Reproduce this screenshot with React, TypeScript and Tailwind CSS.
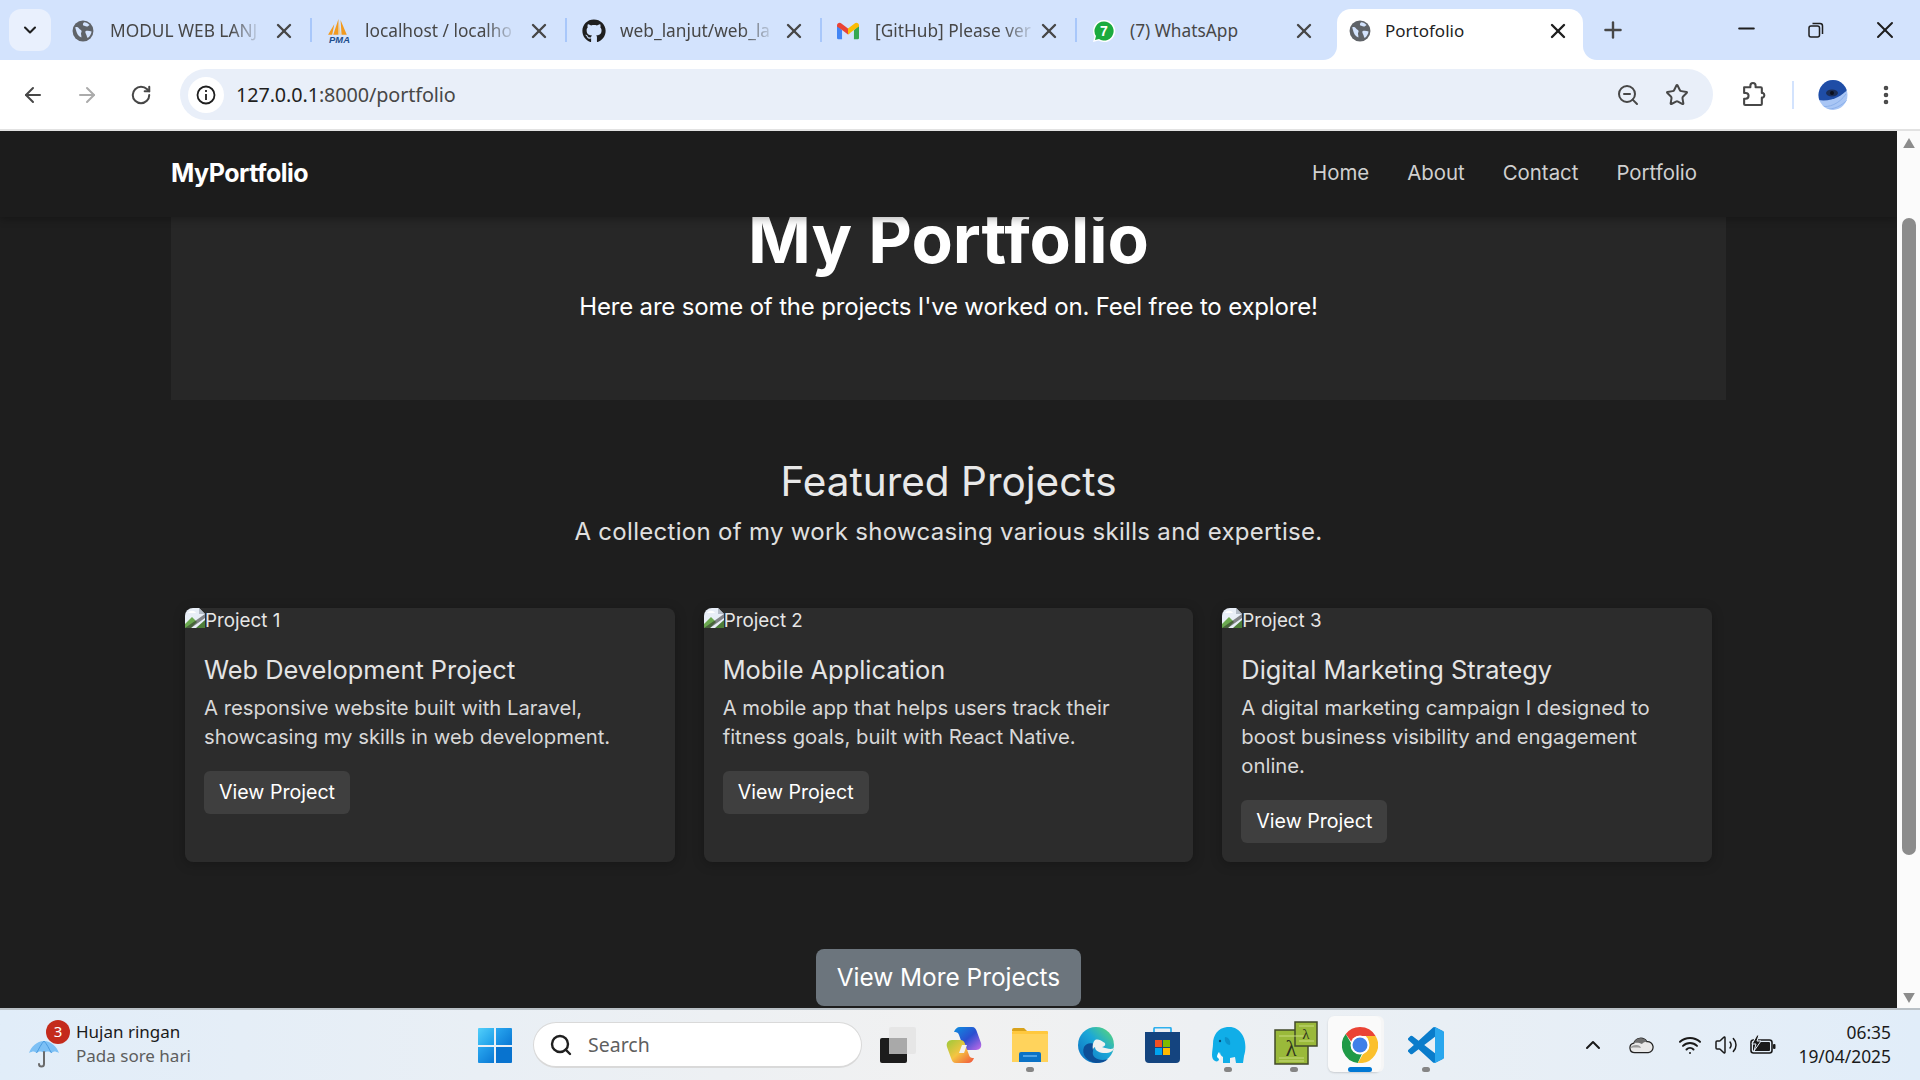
import React from "react";
import { ArrowLeft, ArrowRight, RotateCw, X, Plus, Minus, ChevronDown, ChevronUp, Star, ZoomOut, EllipsisVertical, Search, Wifi, Volume2 } from "lucide-react";
import { FaGithub } from "react-icons/fa";

const Globe = () => (
  <svg viewBox="0 0 20 20" className="w-[22px] h-[22px] shrink-0">
    <circle cx="10" cy="10" r="9.5" fill="#5f6368" />
    <path d="M3 6.5c1.5-.3 2.6.2 3.4 1.2.8 1 2 1 2.3 2.2.2 1-.7 1.6-.5 2.8.1.9.5 1.800.3 3.300C5.500 14.800 4.500 12 4 10.500 3.700 9 3.200 8 3 6.500zM11 2c2 .2 3.700 1 5 2.500-1 .5-1.500 1.700-2.800 1.500-1.200-.2-1.900-1.200-3-1C9.600 4.200 10 3 11 2zM12.500 10c1.500-.4 3.600-.2 5.300.4-.2 2.200-1.500 4.400-3.500 6-.8-1-.8-2-1.300-3-.4-1.100-1.500-2.700-.5-3.400z" fill="#d3e3fd" />
  </svg>
);
const Pma = () => (
  <svg viewBox="0 0 24 24" className="w-[25px] h-[25px] shrink-0">
    <path d="M11 0 6 15h5zM13 1l1 14h5zM7 5 1 15h4z" fill="#f29a1f" />
    <path d="M11.500 3 12 15h1z" fill="#f7c66b" />
    <text x="12" y="23" textAnchor="middle" fontFamily="Liberation Sans" fontStyle="italic" fontWeight="700" fontSize="9" fill="#1e4e8c">PMA</text>
  </svg>
);
const Gh = () => <FaGithub className="w-[24px] h-[24px] shrink-0 text-[#1f1f1f]" />;
const Gmail = () => (
  <svg viewBox="0 0 24 18" className="w-[22px] h-[18px] shrink-0">
    <path d="M0 3v13.500A1.500 1.500 0 0 0 1.500 18H5.500V8z" fill="#4285f4" />
    <path d="M24 3v13.500a1.500 1.500 0 0 1-1.500 1.500H18.500V8z" fill="#34a853" />
    <path d="M0 3c0-2.500 2.800-3.800 4.800-2.300L12 6.200l2 5-2 1.500-6.500-4.700L0 4z" fill="#ea4335" />
    <path d="M18.500 8 12 12.700V6.200L19.200.7C21.200-.8 24 .5 24 3v1z" fill="#fbbc04" />
  </svg>
);
const Wa = () => (
  <svg viewBox="0 0 24 24" className="w-[24px] h-[24px] shrink-0">
    <path d="M12 1a11 11 0 0 0-9.500 16.500L1 23l5.700-1.500A11 11 0 1 0 12 1z" fill="#ffffff" />
    <path d="M12 2.500a9.500 9.500 0 0 0-8 14.600L3 21l4-1a9.500 9.500 0 1 0 5-17.500z" fill="#1aab3e" />
    <text x="12" y="17" textAnchor="middle" fontFamily="Liberation Sans" fontWeight="700" fontSize="14" fill="#fff">7</text>
  </svg>
);

function Tab({ icon, title, sep = true }: { icon: React.ReactNode; title: string; sep?: boolean }) {
  return (
    <div className="relative w-[255px] h-[51px] pb-[7px] shrink-0 flex items-center">
      <div className="w-[50px] pl-[12px] flex justify-start">{icon}</div>
      <div className="w-[150px] whitespace-nowrap text-[17.3px] text-[#474747]">
        {sep ? <span className="inline-block [mask-image:linear-gradient(90deg,#000_82%,rgba(0,0,0,0.15))]">{title}</span> : title}
      </div>
      <X className="ml-[12px] w-[24px] h-[24px] text-[#474747]" strokeWidth={2.4} />
      {sep && <div className="absolute right-[3px] top-[9px] h-[24px] w-[2px] bg-[#a8c7fa]" />}
    </div>
  );
}

const Broken = () => (
  <svg viewBox="0 0 20 20" className="w-[20px] h-[20px] shrink-0">
    <path d="M0 1.500A1.500 1.500 0 0 1 1.500 0H14l6 6v14H0z" fill="#e8eef7" />
    <path d="M14 0v6h6z" fill="#b5bdc8" />
    <path d="M3 5c2-3 6-3 8 0z" fill="#fff" />
    <path d="M0 20v-4l7-7 5 5-6 6z" fill="#6aa84f" />
    <path d="M20 12v8h-9z" fill="#4d7d38" />
    <path d="M0 20 20 6v4L6 20z" fill="#2c2c2c" opacity=".55" />
  </svg>
);

function Card({ n, title, lines }: { n: number; title: string; lines: string[] }) {
  return (
    <div className="h-[254px] bg-[#2c2c2c] rounded-[8px] shadow-[0_2px_12px_rgba(0,0,0,0.25)]">
      <div className="flex h-[26px] items-start overflow-hidden rounded-tl-[8px]">
        <Broken />
        <span className="text-[18.8px] leading-[26px] text-[#e6e6e6]">Project {n}</span>
      </div>
      <div className="pl-[19px]">
        <div className="mt-[17px] text-[25.4px] leading-[38px] font-normal text-[#e4e4e4]">{title}</div>
        <div className="mt-[4px] text-[20.3px] leading-[29px] text-[#d8d8d8]">
          {lines.map((l) => <div key={l} className="whitespace-nowrap">{l}</div>)}
        </div>
        <div className="mt-[20px] w-[146px] h-[43px] rounded-[6px] bg-[#3f3f3f] text-white text-[19.6px] flex items-center justify-center">View Project</div>
      </div>
    </div>
  );
}

function TaskIcon({ children, dot, active }: { children: React.ReactNode; dot?: boolean; active?: boolean }) {
  return (
    <div className="relative w-[66px] h-[70px] shrink-0 flex items-center justify-center">
      {active && <div className="absolute left-[1px] top-[6px] w-[53px] h-[56px] rounded-[6px] bg-[#fafafa] shadow-[3px_0_0_#f6f6f6,0_1px_2px_rgba(0,0,0,0.15)]" />}
      <div className="relative">{children}</div>
      {dot && <div className="absolute left-[29px] top-[57px] w-[8px] h-[5px] rounded-full bg-[#858585]" />}
      {active && <div className="absolute left-[21px] top-[57px] w-[24px] h-[5px] rounded-full bg-[#0078d4]" />}
    </div>
  );
}

const WinLogo = () => (
  <svg viewBox="0 0 34 35" className="w-[34px] h-[35px]">
    <defs>
      <linearGradient id="w1" x1="0" y1="0" x2="1" y2="1"><stop offset="0" stopColor="#52cffa" /><stop offset="1" stopColor="#1a9be8" /></linearGradient>
      <linearGradient id="w2" x1="0" y1="0" x2="1" y2="1"><stop offset="0" stopColor="#2aa8f0" /><stop offset="1" stopColor="#0a78d4" /></linearGradient>
    </defs>
    <path d="M1 0h15v17H0V1a1 1 0 0 1 1-1z" fill="url(#w1)" />
    <path d="M18 0h15a1 1 0 0 1 1 1v16H18z" fill="url(#w2)" />
    <path d="M0 19h16v16H1a1 1 0 0 1-1-1z" fill="url(#w2)" />
    <path d="M18 19h16v15a1 1 0 0 1-1 1H18z" fill="#0873cf" />
  </svg>
);
const TaskView = () => (
  <svg viewBox="0 0 36 36" className="w-[36px] h-[36px]">
    <rect x="0" y="11" width="27" height="25" rx="2" fill="#1c1c1c" />
    <rect x="9" y="0" width="27" height="27" rx="2" fill="#e4e4e4" opacity=".85" />
    <rect x="9" y="11" width="18" height="16" fill="#a9a9a9" />
  </svg>
);
const Copilot = () => (
  <svg viewBox="0 0 36 36" className="w-[36px] h-[36px]">
    <defs>
      <linearGradient id="c1" x1="0" y1="0" x2="1" y2="1"><stop offset="0" stopColor="#0f8fe0" /><stop offset=".5" stopColor="#2a4fd0" /><stop offset="1" stopColor="#c86be8" /></linearGradient>
      <linearGradient id="c2" x1="0" y1="0" x2="1" y2="1"><stop offset="0" stopColor="#9cc93a" /><stop offset=".5" stopColor="#f5c542" /><stop offset="1" stopColor="#f0503c" /></linearGradient>
    </defs>
    <path d="M14 0h12c3 0 4 2 5 5l4 11c1 4-1 7-5 7h-8c-3 0-4-1-5-4L13 8c-1-3-3-3-5-3 1-3 3-5 6-5z" fill="url(#c1)" />
    <path d="M22 36H10c-3 0-4-2-5-5L1 20c-1-4 1-7 5-7h8c3 0 4 1 5 4l4 11c1 3 3 3 5 3-1 3-3 5-6 5z" fill="url(#c2)" />
    <path d="M16 18h5l-3 8h-5z" fill="#f2f2f2" />
  </svg>
);
const Explorer = () => (
  <svg viewBox="0 0 36 34" className="w-[36px] h-[34px]">
    <path d="M0 2a2 2 0 0 1 2-2h10l3 3h-15z" fill="#d9a21b" />
    <rect x="0" y="3" width="36" height="31" fill="#ffc83d" rx="1" />
    <path d="M0 6h36v28H0z" fill="#ffd35c" />
    <path d="M7 34v-8a2 2 0 0 1 2-2h18a2 2 0 0 1 2 2v8z" fill="#0a72c6" />
    <rect x="11" y="27" width="14" height="2" fill="#4da3e6" />
  </svg>
);
const Edge = () => (
  <svg viewBox="0 0 36 36" className="w-[36px] h-[36px]">
    <defs>
      <linearGradient id="e1" x1="0" y1="1" x2="1" y2="0"><stop offset="0" stopColor="#0c6cc0" /><stop offset=".55" stopColor="#1ba7d8" /><stop offset="1" stopColor="#62dc6c" /></linearGradient>
    </defs>
    <circle cx="18" cy="18" r="18" fill="url(#e1)" />
    <path d="M36 20c0 4-4 6-9 6-5 0-10-2-10-6 0-3 4-6 8-5 4 1 2 5-1 5 5 2 12 3 12 0z" fill="#f0f0f0" />
    <path d="M17 18c-3-3-9-2-11 2-3 7 3 15 12 16 5 0 9-1 12-4-8 3-17-1-15-8 0-3 2-5 2-6z" fill="#0d4f97" />
    <path d="M17 13c3-1 6 0 8 2 1 2-1 4-2 5-2-1-8-1-8 3-1-4 0-8 2-10z" fill="#f0f0f0" />
  </svg>
);
const Store = () => (
  <svg viewBox="0 0 35 36" className="w-[35px] h-[36px]">
    <path d="M9 6V2a1.500 1.500 0 0 1 1.500-1.500h14A1.500 1.500 0 0 1 26 2v4" fill="none" stroke="#2fb0ee" strokeWidth="1.800" />
    <path d="M0 5h35v27a4 4 0 0 1-4 4H4a4 4 0 0 1-4-4z" fill="#14447f" />
    <rect x="10" y="13" width="7" height="7" fill="#f25022" />
    <rect x="18" y="13" width="7" height="7" fill="#7fba00" />
    <rect x="10" y="21" width="7" height="7" fill="#00a4ef" />
    <rect x="18" y="21" width="7" height="7" fill="#ffb900" />
  </svg>
);
const Elephant = () => (
  <svg viewBox="0 0 35 36" className="w-[35px] h-[36px]">
    <path d="M16 0c7-1 13 3 16 9 3 6 3 14 1 20l-1 7h-7l-1-6-5 1v5h-7v-6c-2-1-3-3-3-5l-1 7c0 2-2 3-4 2-2-1-3-3-3-6 0-4 1-8 1-11C2 8 7 1 16 0z" fill="#10aee8" />
    <path d="M8 25c1 2 2 5 1 8-1-1-2-2-3-3 0-2 1-4 2-5z" fill="#ffffff" />
    <path d="M14 10c3 0 6 3 5 8-3 0-6-3-5-8z" fill="#0b93cc" />
    <circle cx="9" cy="14" r="1.200" fill="#094e78" />
  </svg>
);
const Lambda = () => (
  <svg viewBox="0 0 44 44" className="w-[44px] h-[44px] -mt-[5px] ml-[4px]">
    <rect x="1" y="9" width="33" height="34" fill="#9ab93a" stroke="#424a2a" strokeWidth="1.500" />
    <rect x="21" y="1" width="22" height="24" fill="#9ab93a" stroke="#424a2a" strokeWidth="1.500" />
    <path d="M5 15h25M5 37h25M5 40h25M25 5h15M25 20h15" stroke="#c8db7e" strokeWidth="1.200" />
    <text x="17" y="35" textAnchor="middle" fontFamily="Liberation Serif" fontSize="23" fill="#2e3320">λ</text>
    <text x="32" y="18" textAnchor="middle" fontFamily="Liberation Serif" fontSize="15" fill="#2e3320">λ</text>
  </svg>
);
const Chrome = () => (
  <svg viewBox="0 0 36 36" className="w-[36px] h-[36px]">
    <path d="M18 0a18 18 0 0 1 15.600 9H18a9 9 0 0 0-8.500 6L3.700 7A18 18 0 0 1 18 0z" fill="#ea4335" />
    <path d="M3.700 7 11 19.500A8 8 0 0 0 20 26.800L15.800 35.900A18 18 0 0 1 3.700 7z" fill="#1f9a47" />
    <path d="M33.600 9A18 18 0 0 1 15.800 35.900L24 22a9 9 0 0 0-.2-13z" fill="#fbc02d" />
    <circle cx="18" cy="18" r="9.500" fill="#fff" />
    <circle cx="18" cy="18" r="7.500" fill="#3f7fe8" />
  </svg>
);
const VsCode = () => (
  <svg viewBox="0 0 100 100" className="w-[36px] h-[36px]">
    <path d="M96.500 10.800 75.900.9a6.200 6.200 0 0 0-7.100 1.200L29.400 38.100 12.200 25a4.200 4.200 0 0 0-5.300.2L1.400 30.300a4.200 4.200 0 0 0 0 6.200L16.300 50 1.400 63.500a4.200 4.200 0 0 0 0 6.200l5.500 5a4.200 4.200 0 0 0 5.300.3l17.200-13 39.400 35.900a6.200 6.200 0 0 0 7.100 1.200l20.600-9.900a6.200 6.200 0 0 0 3.500-5.600V16.400a6.200 6.200 0 0 0-3.500-5.600zM75 72.700 45.100 50 75 27.300z" fill="#0a7ccb" />
    <path d="M75.900 99.100a6.200 6.200 0 0 1-7.100-1.200c2.300 2.300 6.200.7 6.200-2.600V4.700c0-3.300-3.900-4.900-6.200-2.600a6.200 6.200 0 0 1 7.100-1.200l20.600 9.900a6.200 6.200 0 0 1 3.500 5.600v67.200a6.200 6.200 0 0 1-3.500 5.600z" fill="#2aa7ee" />
  </svg>
);
const Umbrella = () => (
  <svg viewBox="0 0 30 30" className="w-[30px] h-[30px]">
    <path d="M15 3C8 3 2 9 0 15c4-2 5-2 7.500 0 2-2 5.500-2 7.500 0 2-2 5.500-2 7.500 0 2.500-2 3.500-2 7.500 0C28 9 22 3 15 3z" fill="#7cc0f5" />
    <path d="M15 3c-3 3-5 8-7.500 12M15 3c3 3 5 8 7.500 12" stroke="#4a9be0" fill="none" />
    <path d="M15 14v12a2.500 2.500 0 0 1-5 0" stroke="#6a6a6a" strokeWidth="2" fill="none" strokeLinecap="round" />
  </svg>
);
const Cloud = () => (
  <svg viewBox="0 0 26 18" className="w-[25px] h-[18px]">
    <path d="M6 17a5 5 0 0 1-1-9.900A7.500 7.500 0 0 1 18.500 5.500 5.500 5.500 0 0 1 20 17z" fill="#e8e8e8" stroke="#222" strokeWidth="1.300" />
    <path d="M5 7.100A7.500 7.500 0 0 1 18.500 5.500c-3 0-4 1-5 2.500-3-1.500-5.500-1.500-8.500-.9z" fill="#6f6f6f" />
    <path d="M1.500 12c1-2 3-3 6-3 3 0 4 1 5 3-4-.6-7-.6-11 0z" fill="#9a9a9a" />
  </svg>
);
const Battery = () => (
  <svg viewBox="0 0 26 20" className="w-[26px] h-[20px]">
    <rect x="1" y="5" width="21" height="13" rx="2.500" fill="none" stroke="#1a1a1a" strokeWidth="1.600" />
    <rect x="3" y="7" width="17" height="9" rx="1" fill="#1a1a1a" />
    <rect x="23" y="9" width="2.500" height="5" rx="1" fill="#1a1a1a" />
    <path d="M7 0 2 9h4l-2 7 7-10H7l2-6z" fill="#1a1a1a" stroke="#e8f0f8" strokeWidth="1" />
  </svg>
);
const Extension = () => (
  <svg viewBox="0 0 24 24" className="w-[25px] h-[25px]" fill="none" stroke="#474747" strokeWidth="2" strokeLinejoin="round">
    <path d="M3 5h6V3.500a2.500 2.500 0 0 1 5 0V5h5a1 1 0 0 1 1 1v4.500h1a2.500 2.500 0 0 1 0 4.500h-1v6a1 1 0 0 1-1 1H4a1 1 0 0 1-1-1v-5h1.500a2.500 2.500 0 0 0 0-5.500H3V5z" />
  </svg>
);
const Avatar = () => (
  <svg viewBox="0 0 30 30" className="w-[30px] h-[30px]">
    <defs><clipPath id="av"><ellipse cx="15" cy="15" rx="14.500" ry="15" /></clipPath></defs>
    <g clipPath="url(#av)">
      <rect width="30" height="30" fill="#a9c6f5" />
      <path d="M0 0h30v9C24 16 14 22 0 20z" fill="#1f4da6" />
      <path d="M3 26c8 2 18-2 25-12M7 29c8 1 17-3 23-10" stroke="#8bb0ea" fill="none" />
      <ellipse cx="14" cy="13" rx="6" ry="3.500" fill="#1b2d55" />
      <circle cx="14" cy="13" r="2" fill="#0b0f1c" />
    </g>
  </svg>
);

export default function App() {
  return (
    <div className="w-[1920px] h-[1080px] overflow-hidden flex flex-col font-['Noto_Sans',sans-serif]">
      {/* tab strip */}
      <div className="h-[60px] bg-[#d3e3fd] flex items-start shrink-0 relative">
        <div className="ml-[9px] mt-[9px] w-[42px] h-[42px] rounded-[12px] bg-[#e9f0fd] flex items-center justify-center shrink-0">
          <ChevronDown className="w-[20px] h-[20px] text-[#1f1f1f]" strokeWidth={2.5} />
        </div>
        <div className="ml-[9px] mt-[9px] flex">
          <Tab icon={<Globe />} title="MODUL WEB LANJ" />
          <Tab icon={<Pma />} title="localhost / localho" />
          <Tab icon={<Gh />} title="web_lanjut/web_la" />
          <Tab icon={<Gmail />} title="[GitHub] Please ver" />
          <Tab icon={<Wa />} title="(7) WhatsApp" sep={false} />
          <div className="relative w-[246px] h-[51px] pb-[7px] ml-[2px] bg-white rounded-t-[14px] flex items-center shrink-0">
            <div className="absolute -left-[14px] bottom-0 w-[14px] h-[14px] bg-white"><div className="w-full h-full bg-[#d3e3fd] rounded-br-[14px]" /></div>
            <div className="absolute -right-[14px] bottom-0 w-[14px] h-[14px] bg-white"><div className="w-full h-full bg-[#d3e3fd] rounded-bl-[14px]" /></div>
            <div className="w-[48px] pl-[12px]"><Globe /></div>
            <div className="w-[160px] text-[17px] text-[#1f1f1f]">Portofolio</div>
            <X className="w-[24px] h-[24px] text-[#1f1f1f] ml-[1px]" strokeWidth={2.4} />
          </div>
        </div>
        <Plus className="ml-[17px] mt-[17px] w-[26px] h-[26px] text-[#474747]" strokeWidth={2.2} />
        <Minus className="ml-[108px] mt-[16px] w-[25px] h-[25px] text-[#1f1f1f]" strokeWidth={2} />
        <svg viewBox="0 0 16 16" className="ml-[49px] mt-[22px] w-[16px] h-[16px]" fill="none" stroke="#1f1f1f" strokeWidth="1.500">
          <rect x="1" y="4" width="10.500" height="11" rx="2" />
          <path d="M4.500 1.500H12a2.500 2.500 0 0 1 2.500 2.500v8" />
        </svg>
        <X className="ml-[47px] mt-[16px] w-[28px] h-[28px] text-[#1f1f1f]" strokeWidth={1.7} />
      </div>
      {/* toolbar */}
      <div className="h-[71px] shrink-0 bg-white rounded-t-[12px] border-b-2 border-[#e2e2e2] flex items-center relative">
        <ArrowLeft className="ml-[21px] w-[24px] h-[24px] text-[#474747]" strokeWidth={2} />
        <ArrowRight className="ml-[30px] w-[24px] h-[24px] text-[#ababab]" strokeWidth={2} />
        <RotateCw className="ml-[31px] w-[22px] h-[22px] text-[#474747]" strokeWidth={2.2} />
        <div className="ml-[28px] w-[1533px] h-[51px] rounded-full bg-[#e9eff9] flex items-center">
          <div className="ml-[8px] w-[36px] h-[36px] rounded-full bg-white flex items-center justify-center">
            <svg viewBox="0 0 20 20" className="w-[20px] h-[20px]" fill="none" stroke="#1f1f1f" strokeWidth="1.800">
              <circle cx="10" cy="10" r="8.500" />
              <path d="M10 9v6M10 5v2" />
            </svg>
          </div>
          <div className="ml-[12px] text-[19.8px] text-[#1f1f1f] tracking-[-0.1px]">127.0.0.1<span className="text-[#474747]">:8000/portfolio</span></div>
          <ZoomOut className="ml-auto w-[24px] h-[24px] text-[#474747]" strokeWidth={2} />
          <Star className="ml-[25px] mr-[24px] w-[24px] h-[24px] text-[#474747]" strokeWidth={2} />
        </div>
        <div className="ml-[28px]"><Extension /></div>
        <div className="ml-[26px] w-[2px] h-[28px] bg-[#d3e3fd]" />
        <div className="ml-[24px]"><Avatar /></div>
        <EllipsisVertical className="ml-[26px] w-[24px] h-[24px] text-[#474747]" strokeWidth={2.6} />
      </div>
      {/* page + scrollbar */}
      <div className="flex h-[877px] shrink-0">
        <div className="w-[1897px] overflow-hidden bg-[#1e1e1e] text-white font-[Inter,sans-serif]">
          <nav className="relative z-10 h-[86px] bg-[#1c1c1c] shadow-[0_2px_8px_rgba(0,0,0,0.3)] flex items-center pl-[171px]">
            <div className="text-[25px] font-bold tracking-[-0.5px]">MyPortfolio</div>
            <div className="ml-auto mr-[200px] mb-[2px] flex gap-[38px] text-[20.4px] text-[#d0d0d0]">
              <span>Home</span><span>About</span><span>Contact</span><span>Portfolio</span>
            </div>
          </nav>
          <section className="ml-[171px] w-[1555px] h-[183px] bg-[#272727] flex flex-col items-center">
            <h1 className="-mt-[16px] text-[67.5px] leading-[76px] font-bold">My Portfolio</h1>
            <p className="mt-[12px] text-[24px] leading-[36px] tracking-[-0.18px]">Here are some of the projects I've worked on. Feel free to explore!</p>
          </section>
          <h2 className="mt-[58px] text-center text-[40.5px] leading-[48px] font-normal text-[#e8e8e8]">Featured Projects</h2>
          <p className="mt-[8px] text-center text-[24px] leading-[36px] tracking-[0.3px] text-[#e0e0e0]">A collection of my work showcasing various skills and expertise.</p>
          <div className="ml-[185px] mt-[58px] w-[1527px] grid grid-cols-3 gap-[29px]">
            <Card n={1} title="Web Development Project" lines={["A responsive website built with Laravel,", "showcasing my skills in web development."]} />
            <Card n={2} title="Mobile Application" lines={["A mobile app that helps users track their", "fitness goals, built with React Native."]} />
            <Card n={3} title="Digital Marketing Strategy" lines={["A digital marketing campaign I designed to", "boost business visibility and engagement", "online."]} />
          </div>
          <div className="mt-[87px] flex justify-center">
            <div className="w-[265px] h-[57px] rounded-[8px] bg-[#6c757d] text-white text-[24.4px] flex items-center justify-center">View More Projects</div>
          </div>
        </div>
        <div className="w-[23px] bg-[#fbfbfb] flex flex-col items-center">
          <svg viewBox="0 0 14 12" className="mt-[7px] w-[14px] h-[10px]"><path d="M7 0l7 12H0z" fill="#8c8c8c" /></svg>
          <div className="mt-[70px] w-[14px] h-[637px] rounded-full bg-[#8c8c8c]" />
          <svg viewBox="0 0 14 12" className="mt-auto mb-[5px] w-[14px] h-[10px]"><path d="M0 0h14L7 12z" fill="#8c8c8c" /></svg>
        </div>
      </div>
      {/* taskbar */}
      <div className="h-[72px] shrink-0 border-t-2 border-[#b9c0c6] bg-gradient-to-r from-[#e1edf9] via-[#f1f1f1] via-50% to-[#e1edf9] flex items-center">
        <div className="relative ml-[29px] w-[30px] h-[30px] mt-[15px]">
          <Umbrella />
          <div className="absolute left-[17px] -top-[18px] w-[24px] h-[24px] rounded-full bg-[#c42b1c] text-white text-[15px] flex items-center justify-center font-['Noto_Sans']">3</div>
        </div>
        <div className="ml-[17px] mb-[2px] w-[150px] text-[17px] leading-[24px]">
          <div className="text-[#1a1a1a]">Hujan ringan</div>
          <div className="text-[#5d5d5d]">Pada sore hari</div>
        </div>
        <div className="ml-[252px]"><WinLogo /></div>
        <div className="ml-[21px] w-[329px] h-[46px] rounded-full bg-white border border-[#d9d9d9] border-b-2 flex items-center">
          <Search className="ml-[15px] w-[24px] h-[24px] text-[#1f1f1f]" strokeWidth={2.4} />
          <span className="ml-[15px] text-[19.5px] text-[#5f5f5f]">Search</span>
        </div>
        <div className="ml-[3px] flex">
          <TaskIcon><TaskView /></TaskIcon>
          <TaskIcon><Copilot /></TaskIcon>
          <TaskIcon dot><Explorer /></TaskIcon>
          <TaskIcon><Edge /></TaskIcon>
          <TaskIcon><Store /></TaskIcon>
          <TaskIcon dot><Elephant /></TaskIcon>
          <TaskIcon dot><Lambda /></TaskIcon>
          <TaskIcon active><Chrome /></TaskIcon>
          <TaskIcon dot><VsCode /></TaskIcon>
        </div>
        <ChevronUp className="ml-[122px] w-[24px] h-[24px] text-[#1a1a1a]" strokeWidth={2} />
        <div className="ml-[24px]"><Cloud /></div>
        <Wifi className="ml-[24px] w-[24px] h-[24px] text-[#1a1a1a]" strokeWidth={2} />
        <Volume2 className="ml-[12px] w-[24px] h-[24px] text-[#1a1a1a]" strokeWidth={1.5} />
        <div className="ml-[12px]"><Battery /></div>
        <div className="ml-auto mr-[29px] mb-[2px] text-right text-[17.4px] leading-[24px] text-[#1a1a1a]">
          <div>06:35</div>
          <div>19/04/2025</div>
        </div>
      </div>
    </div>
  );
}
